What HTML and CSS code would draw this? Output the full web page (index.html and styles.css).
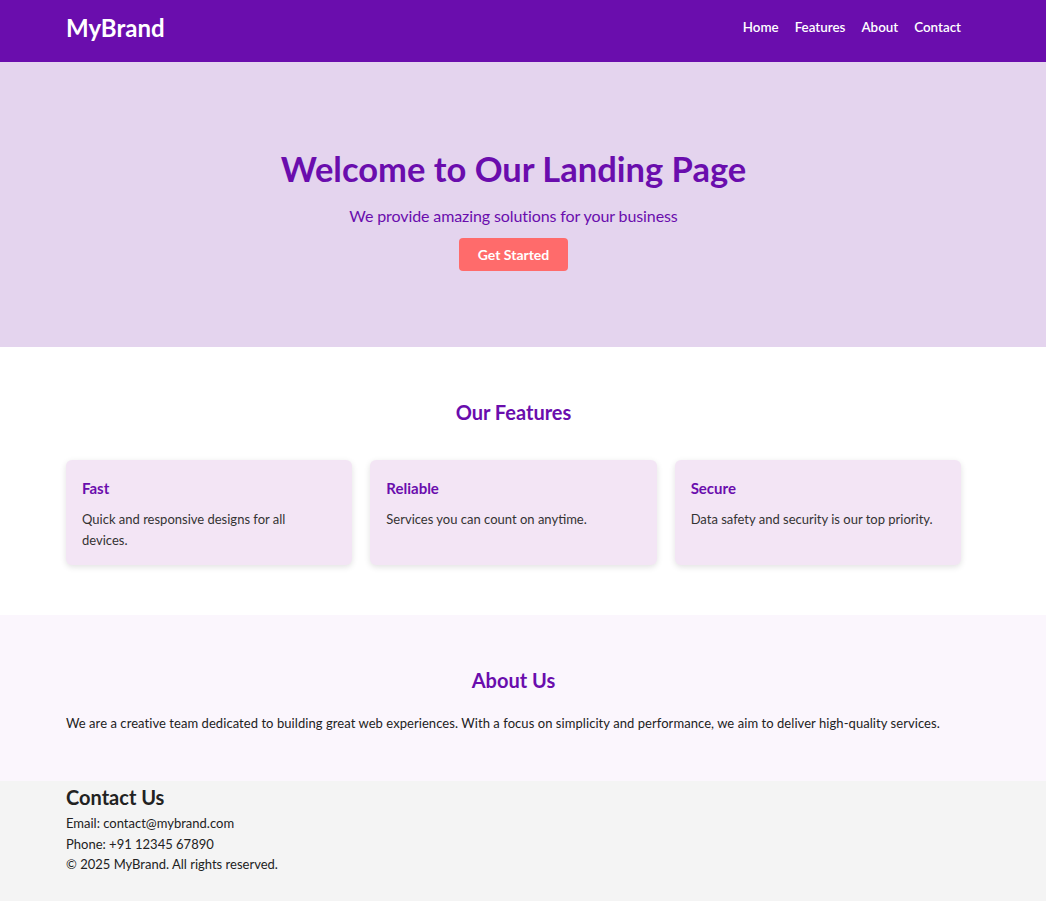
FILE: index.html
```html
<!DOCTYPE html>
<html lang="en">
<head>
<meta charset="UTF-8">
<title>MyBrand</title>
<link rel="stylesheet" href="styles.css">
</head>
<body>
<header class="site-header">
  <div class="wrap">
    <div class="container header-row">
      <div class="brand">MyBrand</div>
      <nav class="nav">
        <a href="#">Home</a>
        <a href="#">Features</a>
        <a href="#">About</a>
        <a href="#">Contact</a>
      </nav>
    </div>
  </div>
</header>

<section class="hero">
  <div class="wrap">
    <h1 class="hero-title">Welcome to Our Landing Page</h1>
    <p class="hero-sub">We provide amazing solutions for your business</p>
    <a class="btn" href="#">Get Started</a>
  </div>
</section>

<section class="features">
  <div class="wrap">
    <div class="container">
      <h2 class="section-title">Our Features</h2>
      <div class="cards">
        <div class="card">
          <h3 class="card-title">Fast</h3>
          <p class="card-text">Quick and responsive designs for all devices.</p>
        </div>
        <div class="card">
          <h3 class="card-title">Reliable</h3>
          <p class="card-text">Services you can count on anytime.</p>
        </div>
        <div class="card">
          <h3 class="card-title">Secure</h3>
          <p class="card-text">Data safety and security is our top priority.</p>
        </div>
      </div>
    </div>
  </div>
</section>

<section class="about">
  <div class="wrap">
    <div class="container">
      <h2 class="section-title">About Us</h2>
      <p class="about-text">We are a creative team dedicated to building great web experiences. With a focus on simplicity and performance, we aim to deliver high-quality services.</p>
    </div>
  </div>
</section>

<footer class="footer">
  <div class="wrap">
    <div class="container">
      <h2 class="footer-title">Contact Us</h2>
      <p class="footer-line">Email: contact@mybrand.com</p>
      <p class="footer-line">Phone: +91 12345 67890</p>
      <p class="footer-line">© 2025 MyBrand. All rights reserved.</p>
    </div>
  </div>
</footer>
</body>
</html>
```

FILE: styles.css
```css
* { box-sizing: border-box; }
html, body { margin: 0; padding: 0; }
body {
  font-family: "Lato", "Open Sans", "Liberation Sans", sans-serif;
  color: #222;
  background: #f4f4f4;
}
.wrap { width: 1027px; }
.container { width: 895px; margin: 0 auto; }

.site-header { background: #6a0dad; height: 62px; }
.header-row {
  height: 62px;
  padding-bottom: 8px;
  display: flex;
  align-items: center;
  justify-content: space-between;
}
.brand { color: #fff; font-weight: 700; font-size: 24px; }
.nav { display: flex; gap: 16px; }
.nav a { color: #fff; text-decoration: none; font-weight: 600; font-size: 13.4px; }

.hero {
  background: #e4d4ee;
  height: 285px;
  padding-top: 85px;
  text-align: center;
}
.hero-title {
  margin: 0;
  color: #6a0dad;
  font-size: 34.5px;
  font-weight: 700;
  line-height: 44px;
}
.hero-sub {
  margin: 15px 0 12px;
  color: #6a0dad;
  font-size: 16px;
  line-height: 20px;
  letter-spacing: -0.1px;
}
.btn {
  display: inline-block;
  background: #ff6b6b;
  color: #fff;
  font-weight: 700;
  font-size: 14px;
  line-height: 33px;
  height: 33px;
  padding: 0 19px;
  border-radius: 4px;
  text-decoration: none;
}

.features { background: #fff; height: 268px; padding-top: 52px; }
.section-title {
  margin: 0;
  text-align: center;
  color: #6a0dad;
  font-size: 20px;
  font-weight: 700;
  line-height: 26px;
}
.cards {
  margin-top: 35px;
  display: flex;
  gap: 18px;
}
.card {
  flex: 1;
  height: 105px;
  background: #f3e5f5;
  border-radius: 6px;
  padding: 19px 24px 19px 16px;
  box-shadow: 0 2px 6px rgba(0,0,0,0.12);
}
.card-title {
  margin: 0;
  color: #6a0dad;
  font-size: 15px;
  font-weight: 700;
  line-height: 18px;
}
.card-text {
  margin: 12px 0 0;
  color: #333;
  font-size: 13px;
  line-height: 21px;
}

.about { background: #fbf6fd; height: 166px; padding-top: 52px; }
.about-text {
  margin: 20px 0 0;
  font-size: 13px;
  line-height: 20px;
  letter-spacing: 0.06px;
  color: #222;
}

.footer { background: #f4f4f4; height: 120px; padding-top: 4px; }
.footer-title {
  margin: 0 0 4px;
  font-size: 20px;
  font-weight: 700;
  line-height: 24px;
  color: #222;
}
.footer-line {
  margin: 0;
  font-size: 13px;
  line-height: 20.5px;
  color: #222;
}
```
